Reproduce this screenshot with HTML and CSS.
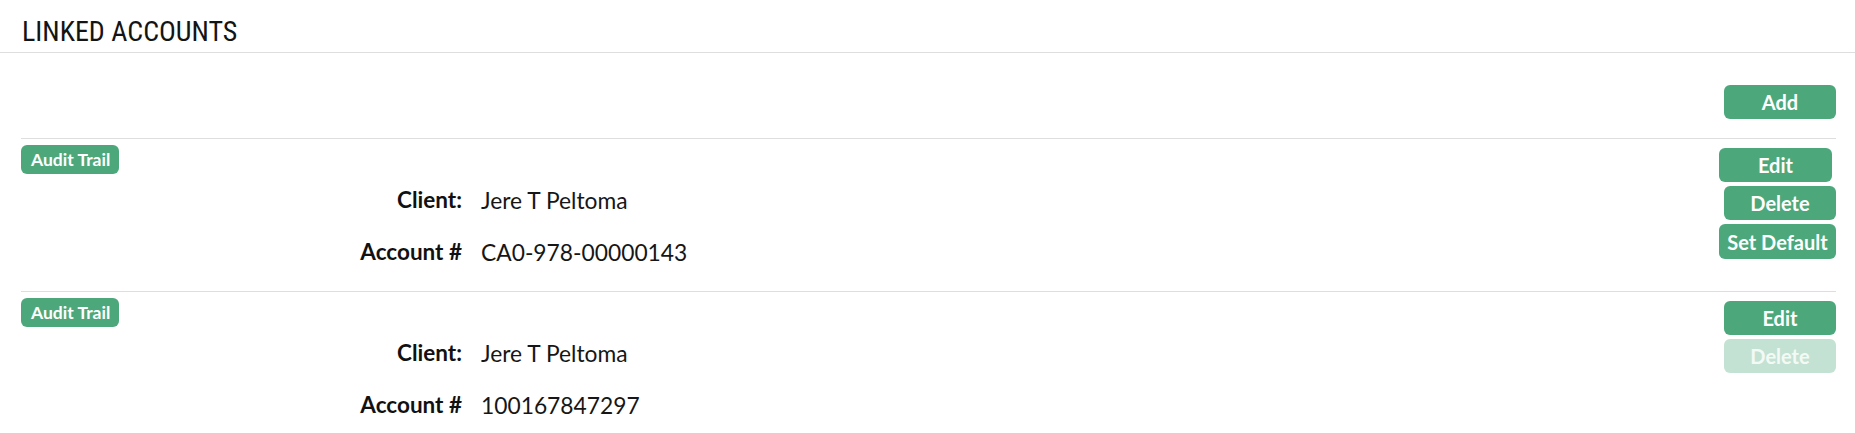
FILE: index.html
```html
<!DOCTYPE html>
<html lang="en">
<head>
<meta charset="utf-8">
<title>Linked Accounts</title>
<link rel="stylesheet" href="styles.css">
</head>
<body>
<header class="page-header">
  <h1 class="page-title">LINKED ACCOUNTS</h1>
</header>
<main class="content">
  <div class="toolbar">
    <button class="btn">Add</button>
  </div>
  <section class="account">
    <div class="account-info">
      <span class="badge">Audit Trail</span>
      <dl class="fields">
        <dt>Client:</dt><dd>Jere T Peltoma</dd>
        <dt>Account #</dt><dd>CA0-978-00000143</dd>
      </dl>
    </div>
    <div class="actions">
      <button class="btn btn-edit-offset">Edit</button>
      <button class="btn">Delete</button>
      <button class="btn btn-wide">Set Default</button>
    </div>
  </section>
  <section class="account">
    <div class="account-info">
      <span class="badge">Audit Trail</span>
      <dl class="fields">
        <dt>Client:</dt><dd>Jere T Peltoma</dd>
        <dt>Account #</dt><dd>100167847297</dd>
      </dl>
    </div>
    <div class="actions">
      <button class="btn">Edit</button>
      <button class="btn btn-disabled" disabled>Delete</button>
    </div>
  </section>
</main>
</body>
</html>
```
FILE: styles.css
```css
* { box-sizing: border-box; }

body {
  margin: 0;
  background: #ffffff;
  color: #161616;
  font-family: Lato, "Liberation Sans", sans-serif;
}

.page-header {
  padding: 18px 21px 6px 22px;
  border-bottom: 1px solid #dedede;
}

.page-title {
  margin: 0;
  font-family: "Roboto Condensed", Roboto, sans-serif;
  font-weight: 400;
  font-size: 28px;
  line-height: 28px;
  color: #141414;
}

.content {
  padding: 0 19px 0 21px;
}

.toolbar {
  display: flex;
  justify-content: flex-end;
  padding: 32px 0 19px;
}

.btn {
  display: flex;
  align-items: center;
  justify-content: center;
  min-width: 112px;
  height: 34px;
  padding: 0 5px;
  border: 0;
  border-radius: 6px;
  background: #4ca87b;
  color: #ffffff;
  font-family: Lato, "Liberation Sans", sans-serif;
  font-weight: 700;
  font-size: 20px;
  cursor: pointer;
}

.btn-disabled {
  background: #c3e2d3;
  color: #f3faf6;
  cursor: default;
}

.btn-edit-offset {
  min-width: 113px;
  margin-right: 4px;
}

.btn-wide {
  min-width: 117px;
  height: 35px;
}

.account {
  display: flex;
  justify-content: space-between;
  border-top: 1px solid #dedede;
  padding: 6px 0 13px;
}

.account-info {
  display: flex;
  flex-direction: column;
  align-items: flex-start;
}

.badge {
  display: inline-flex;
  align-items: center;
  height: 29px;
  padding: 0 9px 0 10px;
  border-radius: 6px;
  background: #4ca87b;
  color: #ffffff;
  font-weight: 700;
  font-size: 17.5px;
}

.fields {
  display: grid;
  grid-template-columns: 441px auto;
  column-gap: 19px;
  margin: 0;
  line-height: 52px;
}

.fields dt {
  text-align: right;
  font-weight: 700;
  font-size: 22.5px;
  color: #111111;
}

.fields dd {
  margin: 0;
  font-weight: 400;
  font-size: 22.8px;
  color: #161616;
}

.actions {
  display: flex;
  flex-direction: column;
  align-items: flex-end;
  gap: 4px;
  padding-top: 3px;
}
```
